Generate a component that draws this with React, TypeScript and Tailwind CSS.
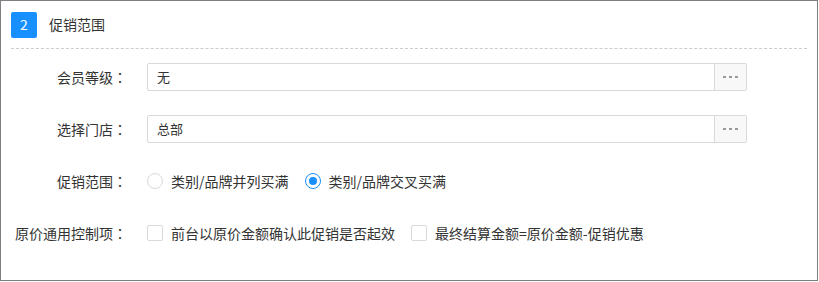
import React, { useState } from 'react';

const FONT = '"Microsoft YaHei", "Noto Sans CJK SC", "Noto Sans", sans-serif';
// TC face centres the full-width colon like YaHei does
const COLON_FONT = '"Noto Sans CJK TC", "Noto Sans CJK SC", sans-serif';

const Label: React.FC<{ text: string }> = ({ text }) => (
  <div className="w-[126px] shrink-0 text-right text-[14px] text-[#333]">
    {text}
    <span style={{ fontFamily: COLON_FONT }}>：</span>
  </div>
);

const PickerInput: React.FC<{ value: string }> = ({ value }) => (
  <div className="ml-[20px] flex h-[28px] w-[600px] rounded-[2px] border border-[#d9d9d9]">
    <div className="flex flex-1 items-center px-[9px] text-[13px] text-[#333]">{value}</div>
    <button className="flex w-[32px] items-center justify-center gap-[3px] border-l border-[#d9d9d9] bg-[#f8f8f8]">
      <span className="h-[2px] w-[3px] bg-[#999]" />
      <span className="h-[2px] w-[3px] bg-[#999]" />
      <span className="h-[2px] w-[3px] bg-[#999]" />
    </button>
  </div>
);

const Radio: React.FC<{ checked: boolean; label: string; onClick: () => void }> = ({ checked, label, onClick }) => (
  <label className="flex cursor-pointer items-center" onClick={onClick}>
    <span
      className={
        checked
          ? 'flex h-[16px] w-[16px] items-center justify-center rounded-full border border-[#1890ff]'
          : 'flex h-[16px] w-[16px] items-center justify-center rounded-full border border-[#d9d9d9]'
      }
    >
      {checked && <span className="h-[8px] w-[8px] rounded-full bg-[#1890ff]" />}
    </span>
    <span className="ml-[8px] text-[14px] text-[#333]">{label}</span>
  </label>
);

const Checkbox: React.FC<{ label: string }> = ({ label }) => (
  <label className="flex cursor-pointer items-center">
    <span className="h-[16px] w-[16px] rounded-[2px] border border-[#d9d9d9] bg-white" />
    <span className="ml-[8px] text-[14px] text-[#333]">{label}</span>
  </label>
);

export default function App() {
  const [scope, setScope] = useState('cross');

  return (
    <div className="h-[282px] w-[819px] bg-white" style={{ fontFamily: FONT }}>
      <div className="h-[281px] w-[818px] border border-[#7f7f7f]">
        <div className="mx-[10px] flex h-[48px] items-center border-b border-dashed border-[#cccccc]">
          <div className="flex h-[26px] w-[26px] items-center justify-center rounded-[2px] bg-[#1890ff] text-[14px] text-white">
            2
          </div>
          <div className="ml-[12px] text-[14px] text-[#333]">促销范围</div>
        </div>

        <div className="flex flex-col gap-[24px] pt-[14px]">
          <div className="flex h-[28px] items-center">
            <Label text="会员等级" />
            <PickerInput value="无" />
          </div>
          <div className="flex h-[28px] items-center">
            <Label text="选择门店" />
            <PickerInput value="总部" />
          </div>
          <div className="flex h-[28px] items-center">
            <Label text="促销范围" />
            <div className="ml-[20px] flex items-center gap-[16px]">
              <Radio checked={scope === 'parallel'} label="类别/品牌并列买满" onClick={() => setScope('parallel')} />
              <Radio checked={scope === 'cross'} label="类别/品牌交叉买满" onClick={() => setScope('cross')} />
            </div>
          </div>
          <div className="flex h-[28px] items-center">
            <Label text="原价通用控制项" />
            <div className="ml-[20px] flex items-center gap-[16px]">
              <Checkbox label="前台以原价金额确认此促销是否起效" />
              <Checkbox label="最终结算金额=原价金额-促销优惠" />
            </div>
          </div>
        </div>
      </div>
    </div>
  );
}
